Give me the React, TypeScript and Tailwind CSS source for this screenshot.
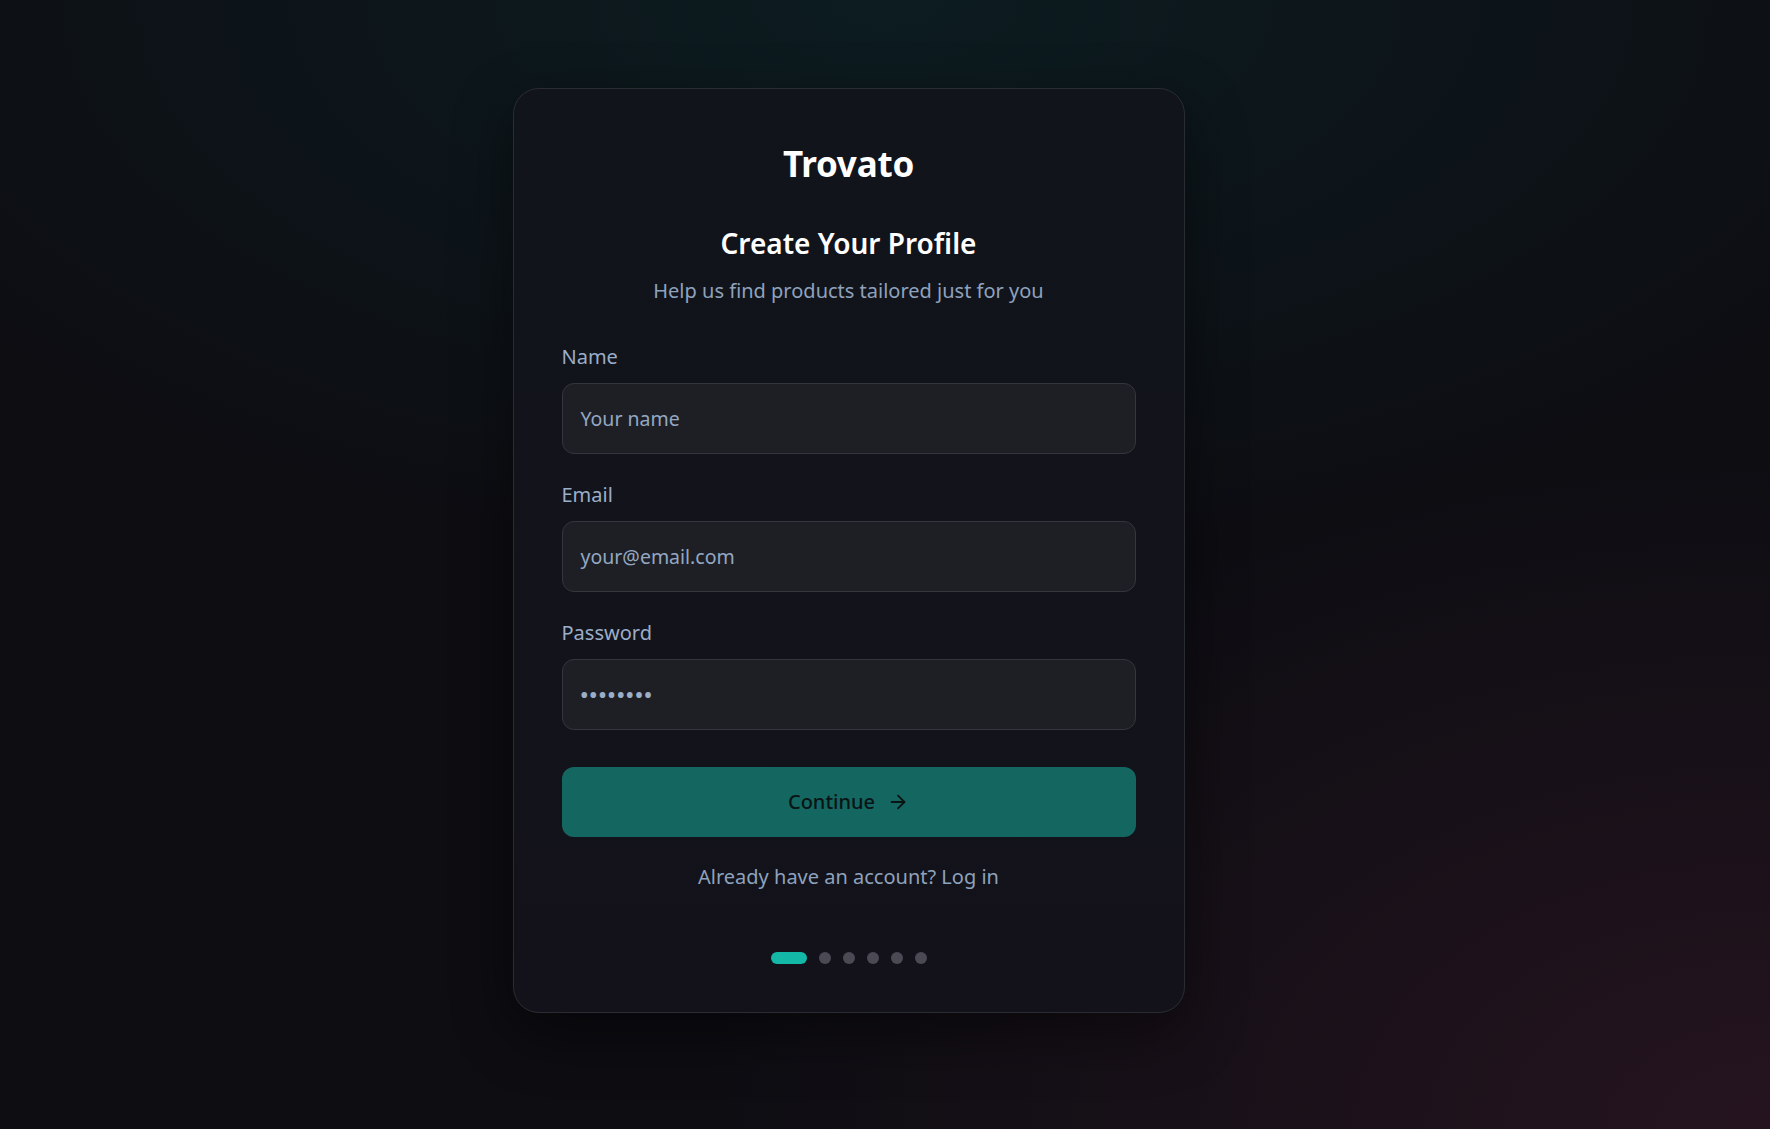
import React from "react";

export default function App() {
  return (
    <div
      className="min-h-screen w-full bg-[#0d0d12] bg-[radial-gradient(ellipse_65%_50%_at_50%_0%,#0c1c20_0%,rgba(12,28,32,0)_100%),radial-gradient(ellipse_60%_60%_at_100%_100%,#25141f_0%,rgba(37,20,31,0)_100%)] flex items-start justify-center pt-[88px] pb-[116px]"
      style={{ fontFamily: '"Noto Sans", "Open Sans", sans-serif' }}
    >
      <div className="mr-[73px] w-[672px] rounded-[26px] border border-[#2a2c33] bg-gradient-to-b from-[#11141b] to-[#13121b] px-12 pt-[51px] pb-12 shadow-[0_20px_60px_rgba(0,0,0,0.45)] flex flex-col">
        <h1 className="text-center text-[35px] leading-[48px] font-bold text-white tracking-[-0.2px]">Trovato</h1>
        <h2 className="mt-[37px] text-center text-[28px] leading-[36px] font-semibold text-white">Create Your Profile</h2>
        <p className="mt-[16px] text-center text-[20px] leading-[28px] text-[#8ea2bd]">Help us find products tailored just for you</p>

        <div className="mt-[38px] flex flex-col gap-[27px]">
          <Field label="Name" placeholder="Your name" />
          <Field label="Email" placeholder="your@email.com" />
          <div className="flex flex-col gap-3">
            <label className="text-[20px] leading-[28px] text-[#9aaec8]">Password</label>
            <div className="h-[71px] rounded-xl border border-[#34363d] bg-[#1e1f25] pl-[18px] flex items-center">
              <span className="text-[#9aaec8] text-[20px] tracking-[1.6px] leading-none font-bold">••••••••</span>
            </div>
          </div>
        </div>

        <button className="mt-[37px] h-[70px] w-full rounded-xl bg-[#146761] flex items-center justify-center gap-3 text-[20px] font-medium text-[#0a1415]">
          <span>Continue</span>
          <svg width="22" height="22" viewBox="0 0 24 24" fill="none" stroke="currentColor" strokeWidth="2" strokeLinecap="round" strokeLinejoin="round">
            <path d="M5 12h14" />
            <path d="m12 5 7 7-7 7" />
          </svg>
        </button>

        <p className="mt-[26px] text-center text-[20px] leading-[28px] text-[#8ea2bd]">Already have an account? Log in</p>

        <div className="mt-[61px] flex items-center justify-center gap-3">
          <span className="h-3 w-9 rounded-full bg-[#14b8a6]" />
          <span className="h-3 w-3 rounded-full bg-[#4a4a54]" />
          <span className="h-3 w-3 rounded-full bg-[#4a4a54]" />
          <span className="h-3 w-3 rounded-full bg-[#4a4a54]" />
          <span className="h-3 w-3 rounded-full bg-[#4a4a54]" />
          <span className="h-3 w-3 rounded-full bg-[#4a4a54]" />
        </div>
      </div>
    </div>
  );
}

function Field({ label, placeholder }: { label: string; placeholder: string }) {
  return (
    <div className="flex flex-col gap-3">
      <label className="text-[20px] leading-[28px] text-[#9aaec8]">{label}</label>
      <div className="h-[71px] rounded-xl border border-[#34363d] bg-[#1e1f25] pl-[18px] flex items-center">
        <span className="text-[19.5px] text-[#94a8c2]">{placeholder}</span>
      </div>
    </div>
  );
}
